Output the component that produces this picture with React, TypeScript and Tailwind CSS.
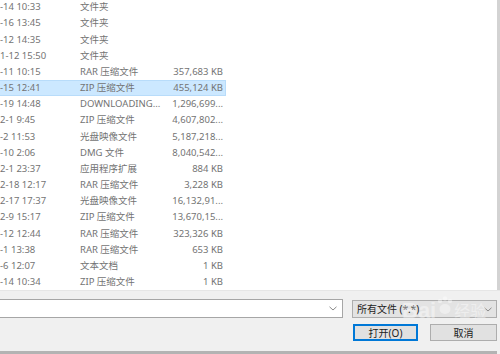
import React from "react";

const rows: [string, string, string][] = [
  ["-14 10:33", "文件夹", ""],
  ["-16 13:45", "文件夹", ""],
  ["-12 14:35", "文件夹", ""],
  ["1-12 15:50", "文件夹", ""],
  ["-11 10:15", "RAR 压缩文件", "357,683 KB"],
  ["-15 12:41", "ZIP 压缩文件", "455,124 KB"],
  ["-19 14:48", "DOWNLOADING...", "1,296,699..."],
  ["2-1 9:45", "ZIP 压缩文件", "4,607,802..."],
  ["-2 11:53", "光盘映像文件", "5,187,218..."],
  ["-10 2:06", "DMG 文件", "8,040,542..."],
  ["2-1 23:37", "应用程序扩展", "884 KB"],
  ["2-18 12:17", "RAR 压缩文件", "3,228 KB"],
  ["2-17 17:37", "光盘映像文件", "16,132,91..."],
  ["2-9 15:17", "ZIP 压缩文件", "13,670,15..."],
  ["-12 12:44", "RAR 压缩文件", "323,326 KB"],
  ["-1 13:38", "RAR 压缩文件", "653 KB"],
  ["-6 12:07", "文本文档", "1 KB"],
  ["-14 10:34", "ZIP 压缩文件", "1 KB"],
];

const font = { fontFamily: '"Noto Sans", "Noto Sans CJK SC", sans-serif' };

function Chevron({ className }: { className?: string }) {
  return (
    <svg width="8" height="5" viewBox="0 0 8 5" className={className}>
      <path d="M0.5 0.8 L4 4 L7.5 0.8" fill="none" stroke="#8a8a8a" strokeWidth="1" />
    </svg>
  );
}

export default function App() {
  return (
    <div
      className="relative w-[500px] h-[354px] overflow-hidden bg-white flex flex-col text-[9.5px] leading-none"
      style={font}
    >
      <div className="h-[290px] flex shrink-0">
        <div className="flex-1 overflow-hidden">
          <div className="mt-[-1px] flex flex-col">
            {rows.map(([d, t, s], i) => (
              <div
                key={i}
                className={
                  "h-[16.16px] w-[226px] flex items-center text-[#737373] " +
                  (i === 5 ? "bg-[#cce8ff] border-y border-r border-[#b8dcfa]" : "")
                }
              >
                <span className="w-[80px] whitespace-nowrap">{d}</span>
                <span className="w-[90px] whitespace-nowrap">{t}</span>
                <span className="w-[53px] text-right whitespace-nowrap">{s}</span>
              </div>
            ))}
          </div>
        </div>
        <div className="w-[3px] bg-[#d3d3d3]" />
      </div>
      <div className="flex-1 bg-[#f0f0f0] border-t border-[#e6e6e6] flex flex-col pt-[8px] pr-[3px]">
        <div className="flex items-start">
          <div className="w-[343px] h-[19px] bg-white border border-[#a6a6a6] border-l-0 flex items-center justify-end pr-[5px]">
            <Chevron />
          </div>
          <div className="ml-[9px] mt-[1px] flex-1 h-[18px] bg-[#e3e3e3] border border-[#adadad] flex items-center justify-between pl-[4px] pr-[4px] text-[#222] text-[10px]">
            <span>所有文件 (*.*)</span>
            <Chevron />
          </div>
        </div>
        <div className="flex justify-end mt-[6px]">
          <div className="w-[65px] h-[17px] bg-[#e1e1e1] border-2 border-[#0078d7] flex items-center justify-center text-[#222] text-[10px]">
            打开(O)
          </div>
          <div className="ml-[12px] w-[67px] h-[17px] bg-[#e1e1e1] border border-[#adadad] flex items-center justify-center text-[#222] text-[10px]">
            取消
          </div>
        </div>
        <div className="mt-auto h-[3px] bg-[#b3b3b3]" />
      </div>
      <div className="absolute left-[402px] top-[296px] flex items-end pointer-events-none opacity-40">
        <span className="text-[22px] font-bold text-white" style={{ fontFamily: '"Liberation Sans", sans-serif' }}>
          Bai
        </span>
        <svg width="18" height="20" viewBox="0 0 18 20" className="mb-[6px]">
          <circle cx="4" cy="5" r="2.2" fill="white" />
          <circle cx="9" cy="2.5" r="2.2" fill="white" />
          <circle cx="14" cy="5" r="2.2" fill="white" />
          <ellipse cx="9" cy="13" rx="5.5" ry="5" fill="white" />
        </svg>
        <span className="text-[16px] text-white mb-[4px]" style={{ fontFamily: '"Noto Sans CJK SC", sans-serif' }}>
          经验
        </span>
      </div>
    </div>
  );
}
